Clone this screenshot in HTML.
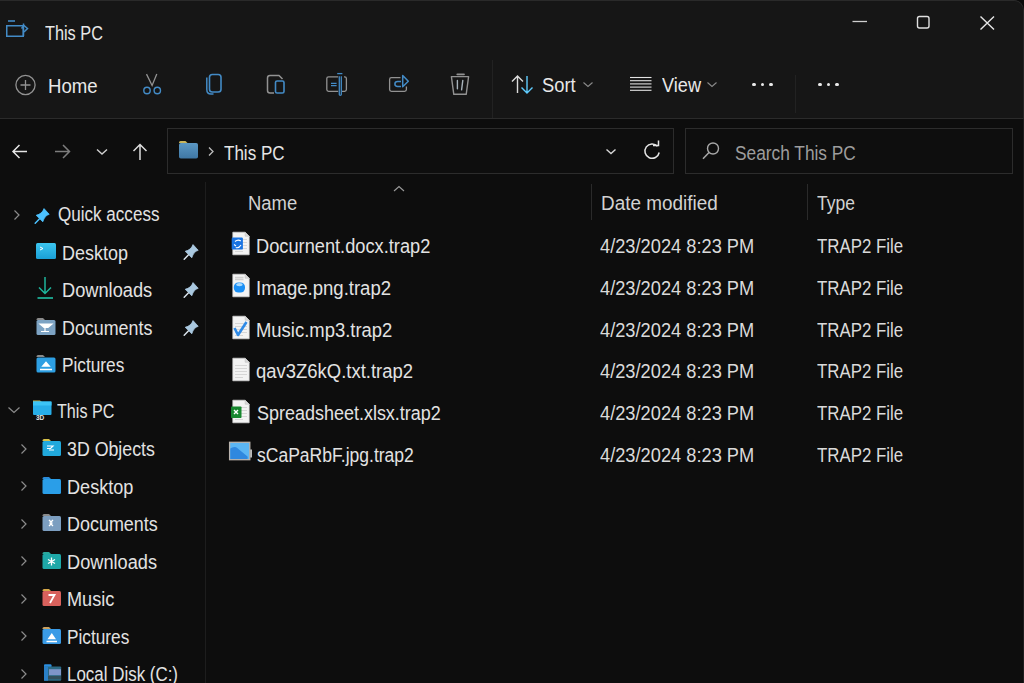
<!DOCTYPE html>
<html><head><meta charset="utf-8"><style>
html,body{margin:0;padding:0;}
body{width:1024px;height:683px;overflow:hidden;position:relative;background:#0d0d0d;font-family:"Liberation Sans",sans-serif;}
.t{position:absolute;white-space:nowrap;line-height:1;transform-origin:0 0;}
.bx{position:absolute;box-sizing:border-box;}
svg{overflow:visible;}
</style></head><body>
<div class="bx" style="left:0;top:0;width:1024px;height:119px;background:#161616;border-top:1px solid #2a2a2a;border-right:1px solid #262626;border-bottom:1px solid #2b2b2b;border-top-right-radius:10px;"></div>
<div class="bx" style="left:1014px;top:0;width:10px;height:10px;background:#0a0a0a;z-index:-1"></div>
<svg style="position:absolute;left:0px;top:10px;" width="40" height="35" viewBox="0 0 40 35"><rect x="6.75" y="15.75" width="16.5" height="10.5" fill="none" stroke="#438bc6" stroke-width="1.5"/><line x1="8" y1="11" x2="15" y2="11" stroke="#438bc6" stroke-width="1.6"/><path d="M23.5 13.5 V26" stroke="#438bc6" stroke-width="1.5"/><path d="M21.5 18.5 L24 15.5 L27.5 18.5 L24 22" fill="none" stroke="#438bc6" stroke-width="1.5"/></svg>
<div class="t" style="left:44.50px;top:23.00px;font-size:20px;color:#e8e8e8;transform:scaleX(0.8143);">This PC</div>
<svg style="position:absolute;left:840px;top:0px;" width="184" height="50" viewBox="0 0 184 50"><line x1="12.5" y1="21.5" x2="27" y2="21.5" stroke="#cfcfcf" stroke-width="1.3"/><rect x="77.5" y="16.5" width="11.5" height="11.5" rx="2" fill="none" stroke="#e0e0e0" stroke-width="1.4"/><path d="M140.5 16.5 L154 29.5 M154 16.5 L140.5 29.5" stroke="#e6e6e6" stroke-width="1.4"/></svg>
<svg style="position:absolute;left:10px;top:70px;" width="32" height="32" viewBox="0 0 32 32"><circle cx="15.5" cy="15" r="9.6" fill="none" stroke="#929292" stroke-width="1.3"/><path d="M10.5 15 H20.5 M15.5 10 V20" stroke="#929292" stroke-width="1.3"/></svg>
<div class="t" style="left:47.77px;top:75.80px;font-size:20px;color:#e8e8e8;transform:scaleX(0.9308);">Home</div>
<svg style="position:absolute;left:140px;top:70px;" width="26" height="28" viewBox="0 0 26 28"><path d="M6.5 4.1 L12.1 15.5 L16.8 4.1" stroke="#929292" stroke-width="1.3" fill="none" stroke-linejoin="miter"/><circle cx="7" cy="20.5" r="3.2" fill="none" stroke="#438bc6" stroke-width="1.4"/><circle cx="17.3" cy="20.5" r="3.2" fill="none" stroke="#438bc6" stroke-width="1.4"/></svg>
<svg style="position:absolute;left:200px;top:70px;" width="26" height="28" viewBox="0 0 26 28"><rect x="9.5" y="4.5" width="11.5" height="17.5" rx="2.8" fill="none" stroke="#438bc6" stroke-width="1.6"/><path d="M6.8 7.5 V19.5 Q6.8 24 11 24 H13.5" fill="none" stroke="#438bc6" stroke-width="1.5"/></svg>
<svg style="position:absolute;left:260px;top:70px;" width="30" height="28" viewBox="0 0 30 28"><path d="M14 23 H10 Q7.5 23 7.5 20.5 V8 Q7.5 5.5 10 5.5 H19 L22.5 9" fill="none" stroke="#929292" stroke-width="1.5"/><rect x="15.5" y="11" width="8.5" height="12" rx="1.6" fill="none" stroke="#438bc6" stroke-width="1.6"/></svg>
<svg style="position:absolute;left:320px;top:70px;" width="32" height="28" viewBox="0 0 32 28"><path d="M18.2 6.8 H8.6 Q6.8 6.8 6.8 8.6 V19.5 Q6.8 21.3 8.6 21.3 H18.2 M22 21.3 H24.6 Q26.4 21.3 26.4 19.5 V8.6 Q26.4 6.8 24.6 6.8 H24" fill="none" stroke="#929292" stroke-width="1.3"/><path d="M19.3 6.3 V24.5 Q19.3 25.3 20.2 25.3 Q21.3 25.3 21.3 24.5 V6.3" fill="none" stroke="#438bc6" stroke-width="1.3"/><path d="M17.2 3.6 H22.4" fill="none" stroke="#438bc6" stroke-width="1.3"/><path d="M11 13.4 H16.6 M11 15.6 H16.6" stroke="#438bc6" stroke-width="1.1"/></svg>
<svg style="position:absolute;left:380px;top:70px;" width="32" height="28" viewBox="0 0 32 28"><path d="M20.5 7.6 H11.4 Q9.6 7.6 9.6 9.4 V19.6 Q9.6 21.4 11.4 21.4 H24.6 Q26.4 21.4 26.4 19.6 V16.5" fill="none" stroke="#929292" stroke-width="1.3"/><path d="M21 11.6 H17.6 Q14.9 11.6 14.9 14 Q14.9 16.4 17.6 16.4 H21" fill="none" stroke="#438bc6" stroke-width="1.5"/><path d="M22.7 5.5 L28.3 11.3 L22.7 16.8 Z" fill="none" stroke="#438bc6" stroke-width="1.5" stroke-linejoin="round"/></svg>
<svg style="position:absolute;left:445px;top:70px;" width="30" height="28" viewBox="0 0 30 28"><path d="M12.3 4.3 H19" stroke="#929292" stroke-width="1.8" stroke-linecap="round"/><path d="M6.4 6.6 H23.6 L21.2 24.3 H8.8 Z" fill="none" stroke="#929292" stroke-width="1.4" stroke-linejoin="round"/><path d="M12.4 10.4 V18.8 M17.8 10.4 L16.6 19.8" stroke="#a9b4bc" stroke-width="1.4" stroke-linecap="round"/></svg>
<div class="bx" style="left:492px;top:60px;width:1px;height:58px;background:#222222"></div>
<svg style="position:absolute;left:505px;top:70px;" width="34" height="28" viewBox="0 0 34 28"><path d="M12.5 6 V23 M7 11.5 L12.5 6 L18 11.5" fill="none" stroke="#dcdcdc" stroke-width="1.4"/><path d="M22 6 V23 M16.5 17.5 L22 23 L27.5 17.5" fill="none" stroke="#60cdff" stroke-width="1.4"/></svg>
<div class="t" style="left:542.08px;top:75.40px;font-size:20px;color:#e8e8e8;transform:scaleX(0.9167);">Sort</div>
<svg style="position:absolute;left:580px;top:78px;" width="16" height="12" viewBox="0 0 16 12"><path d="M3.5 4.5 L8 8.5 L12.5 4.5" fill="none" stroke="#8a8a8a" stroke-width="1.1"/></svg>
<svg style="position:absolute;left:625px;top:72px;" width="30" height="22" viewBox="0 0 30 22"><line x1="5" y1="5.5" x2="26.5" y2="5.5" stroke="#e2e2e2" stroke-width="1.1"/><line x1="5" y1="8.7" x2="26.5" y2="8.7" stroke="#e2e2e2" stroke-width="1.1"/><line x1="5" y1="11.9" x2="26.5" y2="11.9" stroke="#e2e2e2" stroke-width="1.1"/><line x1="5" y1="15.1" x2="26.5" y2="15.1" stroke="#e2e2e2" stroke-width="1.1"/><line x1="5" y1="18.3" x2="26.5" y2="18.3" stroke="#e2e2e2" stroke-width="1.1"/></svg>
<div class="t" style="left:662.00px;top:75.40px;font-size:20px;color:#e8e8e8;transform:scaleX(0.9070);">View</div>
<svg style="position:absolute;left:704px;top:78px;" width="16" height="12" viewBox="0 0 16 12"><path d="M3.5 4.5 L8 8.5 L12.5 4.5" fill="none" stroke="#8a8a8a" stroke-width="1.1"/></svg>
<div class="bx" style="left:752.4px;top:82.7px;width:3.2px;height:3.2px;border-radius:50%;background:#eaeaea"></div>
<div class="bx" style="left:760.9px;top:82.7px;width:3.2px;height:3.2px;border-radius:50%;background:#eaeaea"></div>
<div class="bx" style="left:769.4px;top:82.7px;width:3.2px;height:3.2px;border-radius:50%;background:#eaeaea"></div>
<div class="bx" style="left:795px;top:75px;width:1px;height:38px;background:#222222"></div>
<div class="bx" style="left:818.4px;top:82.7px;width:3.2px;height:3.2px;border-radius:50%;background:#eaeaea"></div>
<div class="bx" style="left:826.9px;top:82.7px;width:3.2px;height:3.2px;border-radius:50%;background:#eaeaea"></div>
<div class="bx" style="left:835.4px;top:82.7px;width:3.2px;height:3.2px;border-radius:50%;background:#eaeaea"></div>
<svg style="position:absolute;left:5px;top:138px;" width="30" height="28" viewBox="0 0 30 28"><path d="M22 13.5 H8 M14.5 7 L8 13.5 L14.5 20" fill="none" stroke="#e6e6e6" stroke-width="1.5"/></svg>
<svg style="position:absolute;left:50px;top:138px;" width="30" height="28" viewBox="0 0 30 28"><path d="M5 13.5 H19.5 M13 7 L19.5 13.5 L13 20" fill="none" stroke="#7d7d7d" stroke-width="1.5"/></svg>
<svg style="position:absolute;left:92px;top:140px;" width="20" height="20" viewBox="0 0 20 20"><path d="M5 9.5 L10 14 L15 9.5" fill="none" stroke="#cfcfcf" stroke-width="1.4"/></svg>
<svg style="position:absolute;left:125px;top:138px;" width="30" height="28" viewBox="0 0 30 28"><path d="M15 6.5 V22 M8.5 13 L15 6.5 L21.5 13" fill="none" stroke="#dcdcdc" stroke-width="1.5"/></svg>
<div class="bx" style="left:167px;top:128px;width:507px;height:46px;border:1px solid #2c2c2c;background:#0e0e0e"></div>
<svg style="position:absolute;left:175px;top:136px;" width="28" height="26" viewBox="0 0 28 26"><defs><linearGradient id="fg" x1="0" y1="0" x2="0" y2="1"><stop offset="0" stop-color="#5b98c4"/><stop offset="1" stop-color="#3f77a4"/></linearGradient></defs><path d="M4 6.5 Q4 5 5.5 5 H10.5 L12.5 7 H4 Z" fill="#c8b45a"/><rect x="4" y="7" width="19" height="15.5" rx="1.8" fill="url(#fg)"/></svg>
<svg style="position:absolute;left:203px;top:142px;" width="14" height="20" viewBox="0 0 14 20"><path d="M6 5.5 L10 9.5 L6 13.5" fill="none" stroke="#bdbdbd" stroke-width="1.3"/></svg>
<div class="t" style="left:224.00px;top:142.60px;font-size:20px;color:#e6e6e6;transform:scaleX(0.8514);">This PC</div>
<svg style="position:absolute;left:601px;top:140px;" width="20" height="20" viewBox="0 0 20 20"><path d="M5.5 9.5 L10 13.5 L14.5 9.5" fill="none" stroke="#d6d6d6" stroke-width="1.4"/></svg>
<svg style="position:absolute;left:638px;top:138px;" width="28" height="28" viewBox="0 0 28 28"><path d="M19.5 8.3 A7.2 7.2 0 1 0 21.2 14.5" fill="none" stroke="#e6e6e6" stroke-width="1.5"/><path d="M15 7.5 H20.5 V2.5" fill="none" stroke="#e6e6e6" stroke-width="1.5"/></svg>
<div class="bx" style="left:685px;top:128px;width:328px;height:46px;border:1px solid #2c2c2c;background:#0e0e0e"></div>
<svg style="position:absolute;left:698px;top:138px;" width="26" height="26" viewBox="0 0 26 26"><circle cx="15" cy="10.5" r="5.5" fill="none" stroke="#a8a8a8" stroke-width="1.4"/><path d="M11 14.5 L5 20.8" stroke="#a8a8a8" stroke-width="1.5"/></svg>
<div class="t" style="left:734.83px;top:142.60px;font-size:20px;color:#9d9d9d;transform:scaleX(0.8652);">Search This PC</div>
<div class="bx" style="left:205px;top:182px;width:1px;height:501px;background:#1d1d1d"></div>
<div class="t" style="left:248.08px;top:193.20px;font-size:20px;color:#d2d2d2;transform:scaleX(0.9231);">Name</div>
<svg style="position:absolute;left:390px;top:182px;" width="18" height="12" viewBox="0 0 18 12"><path d="M4 9 L9 4.5 L14 9" fill="none" stroke="#9a9a9a" stroke-width="1.1"/></svg>
<div class="bx" style="left:591px;top:184px;width:1px;height:36px;background:#2a2a2a"></div>
<div class="t" style="left:600.65px;top:193.20px;font-size:20px;color:#d2d2d2;transform:scaleX(0.9455);">Date modified</div>
<div class="bx" style="left:807px;top:184px;width:1px;height:36px;background:#2a2a2a"></div>
<div class="t" style="left:817.40px;top:193.20px;font-size:20px;color:#d2d2d2;transform:scaleX(0.8744);">Type</div>
<svg style="position:absolute;left:228px;top:230.4px;" width="26" height="28" viewBox="0 0 26 28"><path d="M4.8 2.2 H17.2 L21.2 6.2 V24.8 H4.8 Z" fill="#f3f3f3" stroke="#d4d4d4" stroke-width="0.7"/><path d="M17.2 2.2 V6.2 H21.2" fill="#d9d9d9" stroke="#c4c4c4" stroke-width="0.7"/><path d="M7 9.5 H19 M7 12.5 H19 M7 15.5 H19 M7 18.5 H19 M7 21.5 H15" stroke="#d6d6d6" stroke-width="1"/><rect x="3.7" y="7.5" width="11.2" height="12.1" rx="1.2" fill="#1a74e2"/><path d="M7 11.5 Q10 9 12.8 11 M6 14.5 L8 16 M7.8 17.5 Q11 18.5 13 15" stroke="#fff" stroke-width="1.1" fill="none"/></svg>
<div class="t" style="left:256.49px;top:235.90px;font-size:20px;color:#e2e2e2;transform:scaleX(0.9116);">Docurnent.docx.trap2</div>
<div class="t" style="left:600.00px;top:235.90px;font-size:20px;color:#dadada;transform:scaleX(0.9125);">4/23/2024 8:23 PM</div>
<div class="t" style="left:816.80px;top:235.90px;font-size:20px;color:#dadada;transform:scaleX(0.8436);">TRAP2 File</div>
<svg style="position:absolute;left:228px;top:272.2px;" width="26" height="28" viewBox="0 0 26 28"><path d="M4.8 2.2 H17.2 L21.2 6.2 V24.8 H4.8 Z" fill="#f3f3f3" stroke="#d4d4d4" stroke-width="0.7"/><path d="M17.2 2.2 V6.2 H21.2" fill="#d9d9d9" stroke="#c4c4c4" stroke-width="0.7"/><path d="M7 5.5 H15.5 M7 7.5 H15.5" stroke="#d0d0d0" stroke-width="1.4"/><rect x="5.8" y="10.4" width="11.2" height="10.2" rx="4.5" fill="#1a8ff5"/><ellipse cx="11.4" cy="12.6" rx="3.2" ry="1.6" fill="#b8e2ff" opacity="0.9"/></svg>
<div class="t" style="left:255.55px;top:277.70px;font-size:20px;color:#e2e2e2;transform:scaleX(0.9273);">Image.png.trap2</div>
<div class="t" style="left:600.00px;top:277.70px;font-size:20px;color:#dadada;transform:scaleX(0.9125);">4/23/2024 8:23 PM</div>
<div class="t" style="left:816.80px;top:277.70px;font-size:20px;color:#dadada;transform:scaleX(0.8436);">TRAP2 File</div>
<svg style="position:absolute;left:228px;top:314.0px;" width="26" height="28" viewBox="0 0 26 28"><path d="M4.8 2.2 H17.2 L21.2 6.2 V24.8 H4.8 Z" fill="#f3f3f3" stroke="#d4d4d4" stroke-width="0.7"/><path d="M17.2 2.2 V6.2 H21.2" fill="#d9d9d9" stroke="#c4c4c4" stroke-width="0.7"/><path d="M7 9.5 H19 M7 12.5 H19 M7 15.5 H19 M7 18.5 H19 M7 21.5 H15" stroke="#d6d6d6" stroke-width="1"/><path d="M6.5 14 L10 21 L18.5 8" stroke="#2f8ae6" stroke-width="2.6" fill="none" stroke-linejoin="round"/></svg>
<div class="t" style="left:256.48px;top:319.50px;font-size:20px;color:#e2e2e2;transform:scaleX(0.9219);">Music.mp3.trap2</div>
<div class="t" style="left:600.00px;top:319.50px;font-size:20px;color:#dadada;transform:scaleX(0.9125);">4/23/2024 8:23 PM</div>
<div class="t" style="left:816.80px;top:319.50px;font-size:20px;color:#dadada;transform:scaleX(0.8436);">TRAP2 File</div>
<svg style="position:absolute;left:228px;top:355.8px;" width="26" height="28" viewBox="0 0 26 28"><path d="M4.8 2.2 H17.2 L21.2 6.2 V24.8 H4.8 Z" fill="#f3f3f3" stroke="#d4d4d4" stroke-width="0.7"/><path d="M17.2 2.2 V6.2 H21.2" fill="#d9d9d9" stroke="#c4c4c4" stroke-width="0.7"/><path d="M7 9.5 H19 M7 12.5 H19 M7 15.5 H19 M7 18.5 H19 M7 21.5 H15" stroke="#d6d6d6" stroke-width="1"/></svg>
<div class="t" style="left:256.48px;top:361.30px;font-size:20px;color:#e2e2e2;transform:scaleX(0.9232);">qav3Z6kQ.txt.trap2</div>
<div class="t" style="left:600.00px;top:361.30px;font-size:20px;color:#dadada;transform:scaleX(0.9125);">4/23/2024 8:23 PM</div>
<div class="t" style="left:816.80px;top:361.30px;font-size:20px;color:#dadada;transform:scaleX(0.8436);">TRAP2 File</div>
<svg style="position:absolute;left:228px;top:397.6px;" width="26" height="28" viewBox="0 0 26 28"><path d="M4.8 2.2 H17.2 L21.2 6.2 V24.8 H4.8 Z" fill="#f3f3f3" stroke="#d4d4d4" stroke-width="0.7"/><path d="M17.2 2.2 V6.2 H21.2" fill="#d9d9d9" stroke="#c4c4c4" stroke-width="0.7"/><path d="M7 9.5 H19 M7 12.5 H19 M7 15.5 H19 M7 18.5 H19 M7 21.5 H15" stroke="#d6d6d6" stroke-width="1"/><rect x="3" y="8.5" width="10.5" height="11.5" rx="0.8" fill="#17872f"/><path d="M6 12 L10 16 M10 12 L6 16" stroke="#fff" stroke-width="1.4"/></svg>
<div class="t" style="left:256.50px;top:403.10px;font-size:20px;color:#e2e2e2;transform:scaleX(0.8985);">Spreadsheet.xlsx.trap2</div>
<div class="t" style="left:600.00px;top:403.10px;font-size:20px;color:#dadada;transform:scaleX(0.9125);">4/23/2024 8:23 PM</div>
<div class="t" style="left:816.80px;top:403.10px;font-size:20px;color:#dadada;transform:scaleX(0.8436);">TRAP2 File</div>
<svg style="position:absolute;left:226px;top:439.4px;" width="28" height="28" viewBox="0 0 28 28"><rect x="3.6" y="3.3" width="20.2" height="17.4" fill="#5bb6f4" stroke="#b9b3ad" stroke-width="1.3"/><path d="M4.3 9.5 Q6 8.3 8.5 8 Q10 7.8 11.2 9 L21.5 17.6 Q22 19 21.5 20 H4.3 Z" fill="#2f88df"/><rect x="24.4" y="10.5" width="1.4" height="8" fill="#e8e8e8"/></svg>
<div class="t" style="left:256.52px;top:444.90px;font-size:20px;color:#e2e2e2;transform:scaleX(0.8763);">sCaPaRbF.jpg.trap2</div>
<div class="t" style="left:600.00px;top:444.90px;font-size:20px;color:#dadada;transform:scaleX(0.9125);">4/23/2024 8:23 PM</div>
<div class="t" style="left:816.80px;top:444.90px;font-size:20px;color:#dadada;transform:scaleX(0.8436);">TRAP2 File</div>
<svg style="position:absolute;left:10px;top:206.5px;" width="14" height="16" viewBox="0 0 14 16"><path d="M4.5 3.5 L9 8 L4.5 12.5" fill="none" stroke="#8c8c8c" stroke-width="1.2"/></svg>
<svg style="position:absolute;left:27px;top:201.5px;" width="30" height="30" viewBox="0 0 30 30"><path d="M17 6.6 L22.2 12.3 Q17.6 13.6 15.8 19.8 L9.2 13.3 Q15.2 11.9 17 6.6 Z" fill="#4cc2ff" stroke="#4cc2ff" stroke-width="0.8" stroke-linejoin="round"/><path d="M12.3 17.1 L8.2 21.3" stroke="#4cc2ff" stroke-width="1.5" stroke-linecap="round"/></svg>
<div class="t" style="left:57.65px;top:203.70px;font-size:20px;color:#e2e2e2;transform:scaleX(0.8530);">Quick access</div>
<svg style="position:absolute;left:34px;top:240px;" width="24" height="22" viewBox="0 0 24 22"><defs><linearGradient id="dg" x1="0" y1="0" x2="0" y2="1"><stop offset="0" stop-color="#3cc6f0"/><stop offset="1" stop-color="#1a9fd6"/></linearGradient></defs><rect x="2" y="3" width="20" height="16" rx="1.5" fill="url(#dg)"/><path d="M6 7 L9 8.5 L6 10" stroke="#fff" stroke-width="1" fill="none"/></svg>
<div class="t" style="left:61.60px;top:242.60px;font-size:20px;color:#e2e2e2;transform:scaleX(0.8986);">Desktop</div>
<svg style="position:absolute;left:176px;top:238px;" width="30" height="30" viewBox="0 0 30 30"><path d="M17 6.6 L22.2 12.3 Q17.6 13.6 15.8 19.8 L9.2 13.3 Q15.2 11.9 17 6.6 Z" fill="#a9c8df" stroke="#a9c8df" stroke-width="0.8" stroke-linejoin="round"/><path d="M12.3 17.1 L8.2 21.3" stroke="#d8e2ea" stroke-width="1.5" stroke-linecap="round"/></svg>
<svg style="position:absolute;left:34px;top:274px;" width="24" height="28" viewBox="0 0 24 28"><path d="M11 3 V19 M5 13.5 L11 19.5 L17 13.5" fill="none" stroke="#1eb59c" stroke-width="1.5"/><path d="M3.5 24 H19" stroke="#1eb59c" stroke-width="1.7"/></svg>
<div class="t" style="left:62.09px;top:279.90px;font-size:20px;color:#e2e2e2;transform:scaleX(0.9113);">Downloads</div>
<svg style="position:absolute;left:176px;top:276px;" width="30" height="30" viewBox="0 0 30 30"><path d="M17 6.6 L22.2 12.3 Q17.6 13.6 15.8 19.8 L9.2 13.3 Q15.2 11.9 17 6.6 Z" fill="#a9c8df" stroke="#a9c8df" stroke-width="0.8" stroke-linejoin="round"/><path d="M12.3 17.1 L8.2 21.3" stroke="#d8e2ea" stroke-width="1.5" stroke-linecap="round"/></svg>
<svg style="position:absolute;left:34px;top:316px;" width="24" height="22" viewBox="0 0 24 22"><path d="M2.5 3.5 Q2.5 2 4 2 H9 L11 4 H2.5 Z" fill="#8a8a8a"/><rect x="2.5" y="4" width="19" height="15" rx="1.5" fill="#7da3c3"/><path d="M6 8 H18 L14 11.5 H10 Z M11 11 V15.5 M7 15.5 H15" stroke="#fff" stroke-width="1.2" fill="#fff"/></svg>
<div class="t" style="left:61.61px;top:317.50px;font-size:20px;color:#e2e2e2;transform:scaleX(0.8930);">Documents</div>
<svg style="position:absolute;left:176px;top:313.5px;" width="30" height="30" viewBox="0 0 30 30"><path d="M17 6.6 L22.2 12.3 Q17.6 13.6 15.8 19.8 L9.2 13.3 Q15.2 11.9 17 6.6 Z" fill="#a9c8df" stroke="#a9c8df" stroke-width="0.8" stroke-linejoin="round"/><path d="M12.3 17.1 L8.2 21.3" stroke="#d8e2ea" stroke-width="1.5" stroke-linecap="round"/></svg>
<svg style="position:absolute;left:34px;top:353px;" width="24" height="22" viewBox="0 0 24 22"><path d="M2.5 3.5 Q2.5 2 4 2 H9 L11 4 H2.5 Z" fill="#8a8a8a"/><rect x="2.5" y="4.5" width="19" height="15" rx="1.5" fill="#2d9fe3"/><path d="M6 16.5 H18 M12 9.5 L15 13 H9 Z" stroke="#fff" stroke-width="1.6" fill="#fff"/></svg>
<div class="t" style="left:61.64px;top:355.00px;font-size:20px;color:#e2e2e2;transform:scaleX(0.8620);">Pictures</div>
<svg style="position:absolute;left:5px;top:402px;" width="18" height="16" viewBox="0 0 18 16"><path d="M3.5 5.5 L9 10.5 L14.5 5.5" fill="none" stroke="#8c8c8c" stroke-width="1.2"/></svg>
<svg style="position:absolute;left:30px;top:397px;" width="26" height="32" viewBox="0 0 26 32"><path d="M3 3.5 H10 L12 5 H3 Z" fill="#d6c048"/><rect x="3" y="4.5" width="18.5" height="13.5" rx="1" fill="#27aee8"/><rect x="3" y="4.5" width="18.5" height="4" fill="#3cc4f5"/><text x="6" y="23.2" font-size="6.5" font-weight="bold" fill="#e6e6e6" font-family="Liberation Sans">3D</text></svg>
<div class="t" style="left:57.40px;top:400.80px;font-size:20px;color:#e2e2e2;transform:scaleX(0.8057);">This PC</div>
<svg style="position:absolute;left:17px;top:440.9px;" width="14" height="16" viewBox="0 0 14 16"><path d="M4.5 3.5 L9 8 L4.5 12.5" fill="none" stroke="#8c8c8c" stroke-width="1.2"/></svg>
<svg style="position:absolute;left:41px;top:438.4px;" width="24" height="22" viewBox="0 0 24 22"><path d="M1.5 2.5 Q1.5 1 3 1 H8 L10 3 H1.5 Z" fill="#d6c048"/><rect x="1.5" y="3" width="18.5" height="15" rx="1.5" fill="#21a9dc"/><path d="M6 8 H12 L9.5 10.5 H6 M8 12 H13" stroke="#fff" stroke-width="1.2" fill="none"/></svg>
<div class="t" style="left:66.91px;top:439.40px;font-size:20px;color:#e2e2e2;transform:scaleX(0.8887);">3D Objects</div>
<svg style="position:absolute;left:17px;top:478.34999999999997px;" width="14" height="16" viewBox="0 0 14 16"><path d="M4.5 3.5 L9 8 L4.5 12.5" fill="none" stroke="#8c8c8c" stroke-width="1.2"/></svg>
<svg style="position:absolute;left:41px;top:475.84999999999997px;" width="24" height="22" viewBox="0 0 24 22"><path d="M1.5 2.5 Q1.5 1 3 1 H8 L10 3 H1.5 Z" fill="#2a8ad8"/><rect x="1.5" y="3" width="18.5" height="15" rx="1.5" fill="#2a9ee8"/></svg>
<div class="t" style="left:66.89px;top:476.85px;font-size:20px;color:#e2e2e2;transform:scaleX(0.9056);">Desktop</div>
<svg style="position:absolute;left:17px;top:515.8px;" width="14" height="16" viewBox="0 0 14 16"><path d="M4.5 3.5 L9 8 L4.5 12.5" fill="none" stroke="#8c8c8c" stroke-width="1.2"/></svg>
<svg style="position:absolute;left:41px;top:513.3px;" width="24" height="22" viewBox="0 0 24 22"><path d="M1.5 2.5 Q1.5 1 3 1 H8 L10 3 H1.5 Z" fill="#8a8a8a"/><rect x="1.5" y="3" width="18.5" height="15" rx="1.5" fill="#7c9ec0"/><path d="M8 7 L11 10 L8 13 M12 7 L9 10 L12 13" stroke="#fff" stroke-width="1.3" fill="none"/></svg>
<div class="t" style="left:66.90px;top:514.30px;font-size:20px;color:#e2e2e2;transform:scaleX(0.8970);">Documents</div>
<svg style="position:absolute;left:17px;top:553.25px;" width="14" height="16" viewBox="0 0 14 16"><path d="M4.5 3.5 L9 8 L4.5 12.5" fill="none" stroke="#8c8c8c" stroke-width="1.2"/></svg>
<svg style="position:absolute;left:41px;top:550.75px;" width="24" height="22" viewBox="0 0 24 22"><path d="M1.5 2.5 Q1.5 1 3 1 H8 L10 3 H1.5 Z" fill="#2aa89c"/><rect x="1.5" y="3" width="18.5" height="15" rx="1.5" fill="#1ea8a8"/><path d="M10.5 6.5 V14.5 M7 8.5 L14 12.5 M14 8.5 L7 12.5" stroke="#fff" stroke-width="1.3"/></svg>
<div class="t" style="left:66.89px;top:551.75px;font-size:20px;color:#e2e2e2;transform:scaleX(0.9093);">Downloads</div>
<svg style="position:absolute;left:17px;top:590.7px;" width="14" height="16" viewBox="0 0 14 16"><path d="M4.5 3.5 L9 8 L4.5 12.5" fill="none" stroke="#8c8c8c" stroke-width="1.2"/></svg>
<svg style="position:absolute;left:41px;top:588.2px;" width="24" height="22" viewBox="0 0 24 22"><path d="M1.5 2.5 Q1.5 1 3 1 H8 L10 3 H1.5 Z" fill="#d6a848"/><rect x="1.5" y="3" width="18.5" height="15" rx="1.5" fill="#d8615c"/><path d="M7.5 7 H13.5 L9 15" stroke="#fff" stroke-width="1.8" fill="none"/></svg>
<div class="t" style="left:66.89px;top:589.20px;font-size:20px;color:#e2e2e2;transform:scaleX(0.9059);">Music</div>
<svg style="position:absolute;left:17px;top:628.15px;" width="14" height="16" viewBox="0 0 14 16"><path d="M4.5 3.5 L9 8 L4.5 12.5" fill="none" stroke="#8c8c8c" stroke-width="1.2"/></svg>
<svg style="position:absolute;left:41px;top:625.65px;" width="24" height="22" viewBox="0 0 24 22"><path d="M1.5 2.5 Q1.5 1 3 1 H8 L10 3 H1.5 Z" fill="#c8a060"/><rect x="1.5" y="3" width="18.5" height="15" rx="1.5" fill="#3a9be6"/><path d="M5.5 15.5 H16 M10.8 8.5 L13.5 12.5 H8 Z" stroke="#fff" stroke-width="1.6" fill="#fff"/></svg>
<div class="t" style="left:66.94px;top:626.65px;font-size:20px;color:#e2e2e2;transform:scaleX(0.8620);">Pictures</div>
<svg style="position:absolute;left:17px;top:665.6px;" width="14" height="16" viewBox="0 0 14 16"><path d="M4.5 3.5 L9 8 L4.5 12.5" fill="none" stroke="#8c8c8c" stroke-width="1.2"/></svg>
<svg style="position:absolute;left:41px;top:663.1px;" width="24" height="22" viewBox="0 0 24 22"><rect x="3" y="1.2" width="7.5" height="4" rx="1" fill="#2a8ee0"/><rect x="3" y="3.5" width="17.2" height="14.2" rx="1" fill="#2c6a84"/><rect x="3" y="3.5" width="4" height="14.2" fill="#2a80c8"/><rect x="8" y="6.2" width="12" height="6" fill="#7f95c9"/><rect x="7" y="13" width="13" height="3.2" fill="#34505c"/></svg>
<div class="t" style="left:66.95px;top:664.10px;font-size:20px;color:#e2e2e2;transform:scaleX(0.8465);">Local Disk (C:)</div>
<div class="bx" style="left:1023px;top:119px;width:1px;height:564px;background:#1e1e1e"></div>
</body></html>
